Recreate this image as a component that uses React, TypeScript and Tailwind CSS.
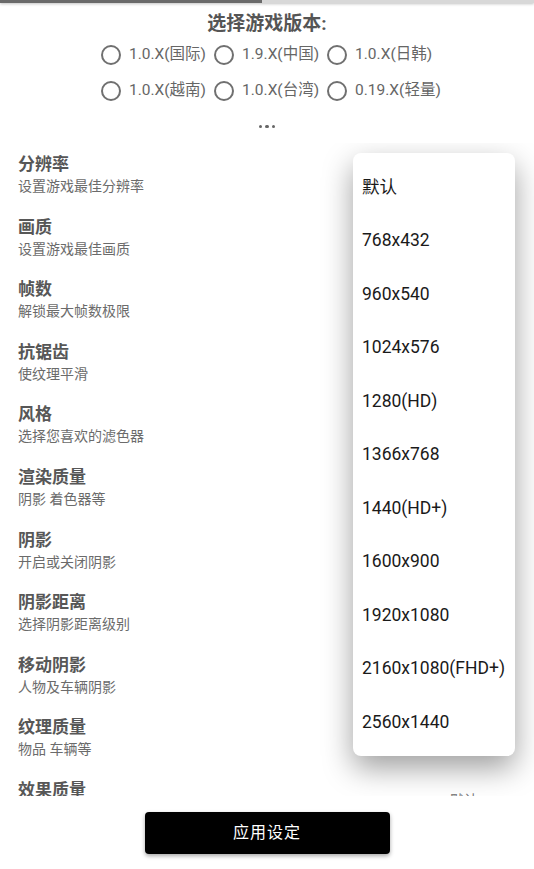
const VERSIONS = [
  ['1.0.X(国际)', '1.9.X(中国)', '1.0.X(日韩)'],
  ['1.0.X(越南)', '1.0.X(台湾)', '0.19.X(轻量)'],
];

const SETTINGS = [
  { title: '分辨率', desc: '设置游戏最佳分辨率' },
  { title: '画质', desc: '设置游戏最佳画质' },
  { title: '帧数', desc: '解锁最大帧数极限' },
  { title: '抗锯齿', desc: '使纹理平滑' },
  { title: '风格', desc: '选择您喜欢的滤色器' },
  { title: '渲染质量', desc: '阴影 着色器等' },
  { title: '阴影', desc: '开启或关闭阴影' },
  { title: '阴影距离', desc: '选择阴影距离级别' },
  { title: '移动阴影', desc: '人物及车辆阴影' },
  { title: '纹理质量', desc: '物品 车辆等' },
  { title: '效果质量', desc: '粒子 特效等' },
];

const RESOLUTIONS = [
  '默认',
  '768x432',
  '960x540',
  '1024x576',
  '1280(HD)',
  '1366x768',
  '1440(HD+)',
  '1600x900',
  '1920x1080',
  '2160x1080(FHD+)',
  '2560x1440',
];

function Radio({ label }: { label: string }) {
  return (
    <div className="flex items-center gap-[8px] mr-[8px]">
      <span className="w-5 h-5 rounded-full border-2 border-[#707070] shrink-0" />
      <span className="text-[15.5px] text-[#666] leading-none whitespace-nowrap">{label}</span>
    </div>
  );
}

export default function App() {
  return (
    <div className="w-[534px] h-[869px] bg-white overflow-hidden font-[Roboto,'Noto_Sans_CJK_SC',sans-serif]">
      {/* top progress strip */}
      <div className="flex h-[3px] shadow-[0_1px_3px_rgba(0,0,0,0.25)]">
        <div className="w-[262px] bg-[#6a6a6a]" />
        <div className="flex-1 bg-[#d8d8d8]" />
      </div>

      <h1 className="mt-[8px] h-[26px] leading-[26px] text-center text-[19px] font-bold text-[#555]">
        选择游戏版本:
      </h1>

      <div className="w-[332px] mx-auto">
        {VERSIONS.map((row, i) => (
          <div key={i} className="flex items-center h-9">
            {row.map(v => (
              <Radio key={v} label={v} />
            ))}
          </div>
        ))}
      </div>

      <div className="flex justify-center items-center gap-[3px] h-[34px] pt-[1px]">
        <span className="w-[3.5px] h-[3.5px] rounded-full bg-[#666]" />
        <span className="w-[3.5px] h-[3.5px] rounded-full bg-[#666]" />
        <span className="w-[3.5px] h-[3.5px] rounded-full bg-[#666]" />
      </div>

      {/* settings list */}
      <div className="relative h-[653px] overflow-hidden">
        {SETTINGS.map(s => (
          <div key={s.title} className="h-[62.6px] shrink-0 flex items-center justify-between pl-[18px] pr-[56px]">
            <div className="flex flex-col self-start pt-[10px]">
              <span className="text-[17px] leading-[22px] font-bold text-[#575757]">{s.title}</span>
              <span className="mt-[2px] text-[14px] leading-[19px] text-[#6b6b6b]">{s.desc}</span>
            </div>
            <span className="text-[14px] text-[#777]">默认</span>
          </div>
        ))}

        {/* resolution dropdown */}
        <div className="absolute left-[353px] top-[10px] w-[162px] h-[603px] bg-white rounded-lg py-[7px] shadow-[0_12px_30px_rgba(0,0,0,0.38)]">
          {RESOLUTIONS.map(r => (
            <div key={r} className="h-[53.5px] flex items-center pl-[9px] text-[17.5px] text-[#1a1a1a] whitespace-nowrap">
              {r}
            </div>
          ))}
        </div>
      </div>

      <button className="mt-4 mx-auto flex items-center justify-center w-[245px] h-[42px] rounded bg-black text-white text-[16px] tracking-[1px] shadow-[0_2px_4px_rgba(0,0,0,0.35)]">
        应用设定
      </button>
    </div>
  );
}
